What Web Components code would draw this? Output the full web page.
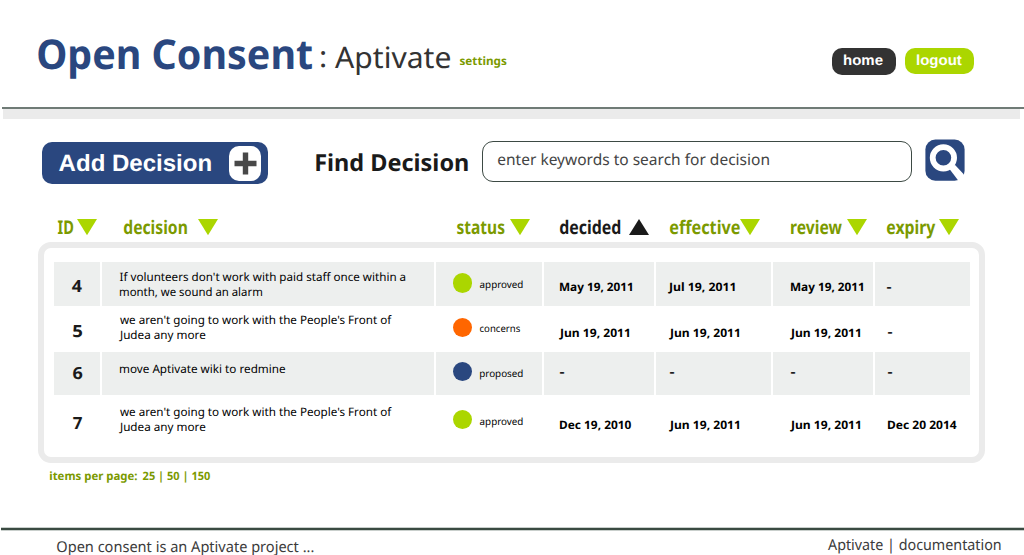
<!DOCTYPE html>
<html lang="en">
<head>
<meta charset="utf-8">
<title>Open Consent</title>
<style>
html,body{margin:0;padding:0;background:#fff;overflow:hidden}
body{font-family:"Noto Sans","Open Sans",sans-serif;width:1024px;height:555px}
</style>
</head>
<body>
<consent-app></consent-app>
<script>
const ctx = document.createElement('canvas').getContext('2d');

/* One line of text whose ink spans `w` px and whose baseline is `b` px below the host's top. */
class FitText extends HTMLElement {
  connectedCallback() {
    const s = +this.getAttribute('s'), w = +this.getAttribute('w'), b = +this.getAttribute('b');
    const weight = this.hasAttribute('bold') ? 700 : 400;
    const arial = this.hasAttribute('arial');
    const fam = arial ? '"Liberation Sans",Arial,sans-serif' : '"Noto Sans","Open Sans",sans-serif';
    const half = arial ? 0.3465 : 0.388;
    ctx.font = `${weight} ${s * 20}px ${fam}`;
    const m = ctx.measureText(this.textContent);
    const left = m.actualBoundingBoxLeft / 20, right = m.actualBoundingBoxRight / 20;
    const k = w / (left + right);
    const dx = left * k;
    const lh = Math.round(2 * (Math.round(b) - half * s));
    const dy = b - Math.round(lh / 2 + half * s) + 0.8;
    this.attachShadow({mode: 'open'}).innerHTML = `<style>
      :host{display:block;flex:none;width:${w}px;height:${lh}px;white-space:nowrap}
      span{display:inline-block;vertical-align:top;font:${weight} ${s}px/${lh}px ${fam};text-rendering:geometricPrecision;
        transform-origin:0 0;transform:translate(${dx}px,${dy}px) scaleX(${k})}
    </style><span><slot></slot></span>`;
  }
}

class PillButton extends HTMLElement {
  connectedCallback() {
    this.attachShadow({mode: 'open'}).innerHTML = `<style>
      :host{display:flex;box-sizing:border-box;flex:none;align-items:flex-start;border-radius:10px;color:#fff}
    </style><slot></slot>`;
  }
}

class SortArrow extends HTMLElement {
  connectedCallback() {
    const up = this.hasAttribute('up');
    this.attachShadow({mode: 'open'}).innerHTML = `<style>
      :host{display:block;flex:none;width:20px;height:17px;margin-top:1.3px}svg{display:block}
    </style><svg width="20" height="17" viewBox="0 0 20 17"><path d="${up ? 'M0 16L10 0L20 16Z' : 'M0 0H20L10 16.3Z'}" fill="${up ? '#1a1a1a' : '#abd600'}"/></svg>`;
  }
}

class AppHeader extends HTMLElement {
  connectedCallback() {
    this.attachShadow({mode: 'open'}).innerHTML = `<style>
      :host{display:block;height:119px}
      .bar{display:flex;align-items:flex-start;height:107px;padding-left:38px;box-sizing:border-box}
      .brand{color:#2a477f}.org{color:#333}.set{color:#7b9a00}
      nav{display:flex;gap:9px;margin-left:auto;padding:48px 50px 0 0}
      .home{background:#333;width:64px;height:26.5px;padding-left:12.3px;margin-top:.4px}
      .out{background:#abd600;width:69px;height:26px;padding-left:12.2px}
      .rule{height:1.5px;margin-left:1.5px;background:#6f7b76}
      .band{height:10.2px;margin:0 4px 0 2.5px;background:#ebebeb}
    </style>
    <div class="bar">
      <fit-text class="brand" bold s="41" w="274" b="69">Open Consent</fit-text>
      <fit-text class="org" s="29" w="4.3" b="67.6" style="margin-left:9.3px">:</fit-text>
      <fit-text class="org" s="29.5" w="115" b="67.6" style="margin-left:9.4px">Aptivate</fit-text>
      <fit-text class="set" bold s="11.6" w="46.3" b="65" style="margin-left:9.6px">settings</fit-text>
      <nav>
        <pill-button class="home"><fit-text arial bold s="14.6" w="38.6" b="17">home</fit-text></pill-button>
        <pill-button class="out"><fit-text arial bold s="14.6" w="44.7" b="17">logout</fit-text></pill-button>
      </nav>
    </div>
    <div class="rule"></div><div class="band"></div>`;
  }
}

class ActionBar extends HTMLElement {
  connectedCallback() {
    this.attachShadow({mode: 'open'}).innerHTML = `<style>
      :host{display:flex;align-items:flex-start;height:99px;padding:20px 0 0 41.5px;box-sizing:border-box}
      .add{background:#2a477f;width:226.5px;height:42.2px;margin-top:3px;padding-left:17px;border-radius:10px}
      .plus{margin:4.2px 0 0 18.6px;width:32.4px;height:34.6px;border-radius:10px;background:#fff;display:grid;place-items:center}
      .find{color:#1a1a1a;margin-left:47.9px}
      .field{display:flex;box-sizing:border-box;width:430px;height:41px;margin:2.2px 0 0 14.3px;padding-left:14.5px;border:1px solid #3d4a44;border-radius:11px;color:#444}
      svg{display:block}.search{margin:.3px 0 0 13px}
    </style>
    <pill-button class="add"><fit-text arial bold s="23.6" w="152" b="29">Add Decision</fit-text>
      <div class="plus"><svg width="23" height="23" viewBox="0 0 23 23"><path d="M8.8 .5H14.2V8.8H22.5V14.2H14.2V22.5H8.8V14.2H.5V8.8H8.8Z" fill="#484848"/></svg></div></pill-button>
    <fit-text class="find" bold s="23.5" w="152" b="31">Find Decision</fit-text>
    <div class="field"><fit-text s="15.6" w="271" b="22.6">enter keywords to search for decision</fit-text></div>
    <svg class="search" width="40" height="42" viewBox="925 139 40 42">
      <rect x="925.4" y="139.5" width="39.2" height="41.2" rx="10" fill="#2a477f"/>
      <circle cx="943.4" cy="157.8" r="10.7" fill="none" stroke="#fff" stroke-width="5.8"/>
      <path d="M949.5 169L954.8 164.8L964 174.6V181H958.6Z" fill="#fff"/>
    </svg>`;
  }
}

const COLS = 'grid-template-columns:46.5px 331.5px 106.3px 109.7px 115px 100px 94.7px;column-gap:2px';

class DecisionRow extends HTMLElement {
  connectedCallback() {
    const d = JSON.parse(this.getAttribute('data'));
    const text = ([t, w, b, x], extra, s) => {
      const hang = t[0] === 'J' ? 1 : 0;
      return `<fit-text ${extra} s="${s}" w="${w + hang}" b="${b}" style="margin-left:${x - hang}px">${t}</fit-text>`;
    };
    this.attachShadow({mode: 'open'}).innerHTML = `<style>
      :host{display:grid;${COLS};grid-template-rows:${d.h}px;height:${d.h}px;color:#000}
      div{display:flex;align-items:flex-start;background:${d.shade ? '#edefee' : 'transparent'}}
      .id{color:#1a1a1a}
      .desc{display:grid;grid-template:100%/100%}.desc>*{grid-area:1/1}
      i{width:19.4px;height:19.4px;border-radius:50%;background:${d.color};margin:${d.dot}px 0 0 17px;flex:none}
    </style>
    <div class="id">${text(d.id, 'bold', 16.8)}</div>
    <div class="desc">${d.desc.map(l => text(l, '', 11.7)).join('')}</div>
    <div><i></i>${text(d.status, '', 9.9)}</div>
    ${d.dates.map(x => `<div>${text(x, 'bold', 11.6)}</div>`).join('')}`;
  }
}

class DecisionTable extends HTMLElement {
  connectedCallback() {
    const heads = [['ID',15.3,3.5,4.4],['decision',63,21,11.7],['status',47.5,20.7,5.8],['decided',60.3,15.5,8.9],['effective',70,13.8,.5],['review',51,18,4.8],['expiry',48.5,12,4]];
    const rows = [
      {h:43.7,shade:1,id:['4',9.8,29.2,18.4],desc:[["If volunteers don't work with paid staff once within a",285.5,19.5,17.3],['month, we sound an alarm',142,34.5,17.6]],
       color:'#abd600',dot:11,status:['approved',42.7,25,7.8],dates:[['May 19, 2011',72,29.2,15.3],['Jul 19, 2011',65.7,29.2,13.3],['May 19, 2011',72,29.2,17.8],['-',4.2,28.7,12]]},
      {h:46,id:['5',9,30,19],desc:[["we aren't going to work with the People's Front of",272,18.5,17.3],['Judea any more',85.3,33.5,17.3]],
       color:'#ff6600',dot:11.7,status:['concerns',40,25.6,7.8],dates:[['Jun 19, 2011',69,31.2,15.5],['Jun 19, 2011',69,31.2,13.7],['Jun 19, 2011',69,31.2,18],['-',4.2,29.7,12.7]]},
      {h:43.5,shade:1,id:['6',9.3,26,18.8],desc:[['move Aptivate wiki to redmine',165.2,21.2,17.6]],
       color:'#2a477f',dot:10,status:['proposed',42.7,24.1,7.8],dates:[['-',4.2,24,15.8],['-',4.2,24,14.2],['-',4.2,24,18.5],['-',4.2,24,12.7]]},
      {h:61.5,id:['7',9,33,19],desc:[["we aren't going to work with the People's Front of",272,21.3,17.3],['Judea any more',85.3,36.3,17.3]],
       color:'#abd600',dot:14.6,status:['approved',42.7,28.7,7.8],dates:[['Dec 19, 2010',71,34.3,15.5],['Jun 19, 2011',69,34.3,13.7],['Jun 19, 2011',69,34.3,18],['Dec 20 2014',68.5,34.3,12.7]]}];
    this.attachShadow({mode: 'open'}).innerHTML = `<style>
      :host{display:block;height:245px}
      .head{display:grid;${COLS};height:24px;padding-left:54px;color:#7b9a00}
      .head div{display:flex;align-items:flex-start}
      .head .on{color:#1a1a1a}
      .frame{margin-left:38.4px;width:946.8px;height:221px;box-sizing:border-box;border:6px solid #ebebeb;border-radius:13px;padding:14.3px 0 0 9.6px}
    </style>
    <div class="head">${heads.map(([t, w, x, g]) => `<div class="${t === 'decided' ? 'on' : ''}"><fit-text bold s="18.8" w="${w}" b="16.3" style="margin:0 ${g}px 0 ${x}px">${t}</fit-text><sort-arrow ${t === 'decided' ? 'up' : ''}></sort-arrow></div>`).join('')}</div>
    <div class="frame"></div>`;
    const frame = this.shadowRoot.querySelector('.frame');
    for (const r of rows) {
      const el = document.createElement('decision-row');
      el.setAttribute('data', JSON.stringify(r));
      frame.append(el);
    }
  }
}

class AppFooter extends HTMLElement {
  connectedCallback() {
    this.attachShadow({mode: 'open'}).innerHTML = `<style>
      :host{display:block;height:92px;overflow:hidden}
      .pages{display:flex;height:64px;padding-left:49.8px;color:#7b9a00;gap:5.8px;box-sizing:border-box}
      .line{height:2px;margin-left:1px;background:#3a4a42;border:solid #c9cfcc;border-width:.6px 0}
      .foot{display:flex;justify-content:space-between;align-items:flex-start;padding:0 23.3px 0 57.3px;color:#3b3b3b}
    </style>
    <div class="pages"><fit-text bold s="11.5" w="87" b="17">items per page:</fit-text><fit-text bold s="11.5" w="67" b="17">25 | 50 | 150</fit-text></div>
    <div class="line"></div>
    <div class="foot"><fit-text s="15" w="256.4" b="21">Open consent is an Aptivate project ...</fit-text><fit-text s="15" w="172.7" b="19">Aptivate | documentation</fit-text></div>`;
  }
}

class ConsentApp extends HTMLElement {
  connectedCallback() {
    this.attachShadow({mode: 'open'}).innerHTML = `<style>
      :host{display:flex;flex-direction:column;width:1024px;height:555px;overflow:hidden;background:#fff}
      app-header,action-bar,decision-table,app-footer{flex:none}
    </style><app-header></app-header><action-bar></action-bar><decision-table></decision-table><app-footer></app-footer>`;
  }
}
customElements.define('fit-text', FitText);
customElements.define('pill-button', PillButton);
customElements.define('sort-arrow', SortArrow);
customElements.define('app-header', AppHeader);
customElements.define('action-bar', ActionBar);
customElements.define('decision-row', DecisionRow);
customElements.define('decision-table', DecisionTable);
customElements.define('app-footer', AppFooter);
customElements.define('consent-app', ConsentApp);
</script>
</body>
</html>
